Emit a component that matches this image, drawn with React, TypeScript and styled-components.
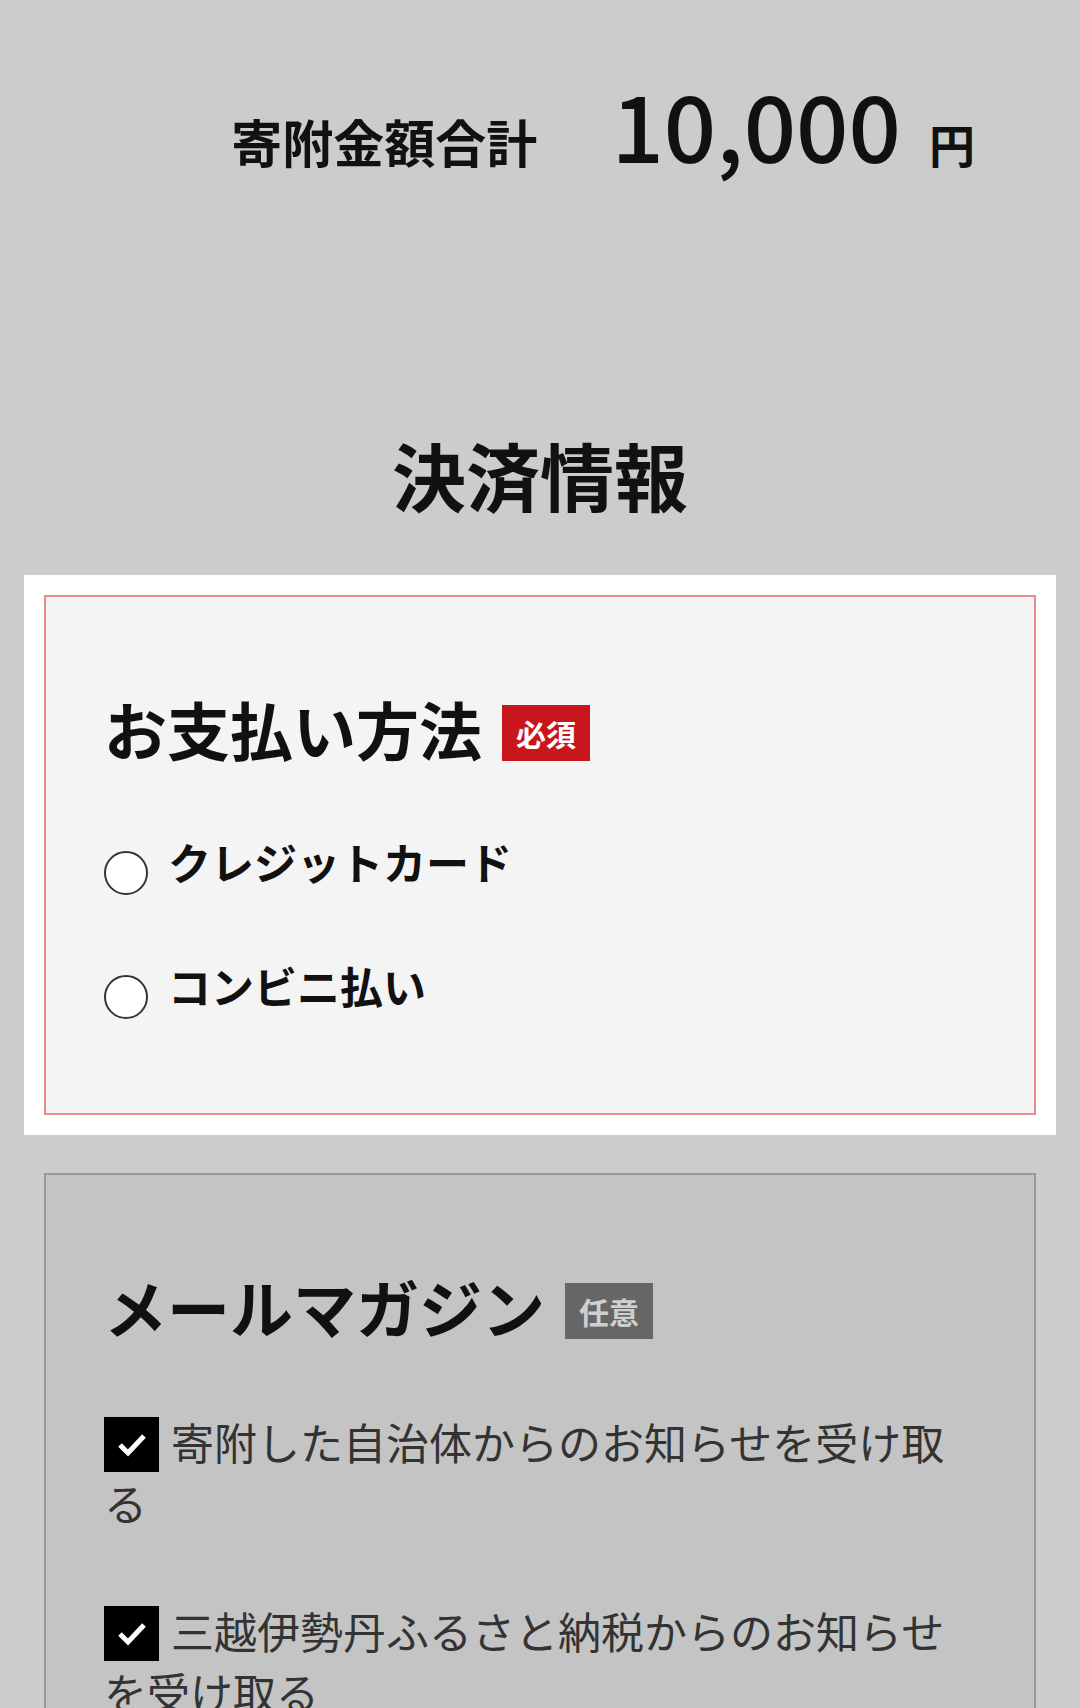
import styled, { createGlobalStyle } from 'styled-components'

const GlobalStyle = createGlobalStyle`
  body {
    margin: 0;
    background: #cccccc;
    color: #111;
    font-family: "Noto Sans CJK JP", "Noto Sans", sans-serif;
  }
`

const Page = styled.main`
  padding: 0 24px 60px;
`

const TotalRow = styled.div`
  align-items: baseline;
  display: flex;
  justify-content: flex-end;
  padding: 77px 81px 0 0;
`

const TotalLabel = styled.span`
  font-size: 51px;
  font-weight: 700;
  line-height: 1;
`

const TotalAmount = styled.span`
  font-size: 92px;
  font-weight: 500;
  line-height: 1;
  margin-left: 74px;
`

const Yen = styled.span`
  font-size: 46px;
  font-weight: 700;
  line-height: 1;
  margin-left: 28px;
`

const SectionTitle = styled.h2`
  font-size: 74px;
  font-weight: 700;
  line-height: 1;
  margin: 268px 0 64px;
  text-align: center;
`

const Highlight = styled.div`
  background: #fff;
  padding: 20px;
`

const Card = styled.section<{ $muted?: boolean }>`
  background: ${({ $muted }) => ($muted ? '#c4c4c4' : '#f4f4f4')};
  border: 2px solid ${({ $muted }) => ($muted ? '#999' : '#ec8a8a')};
  margin: ${({ $muted }) => ($muted ? '38px 20px 0' : '0')};
  padding: 96px 58px 94px;
`

const FieldTitle = styled.h3`
  align-items: center;
  display: flex;
  font-size: 63px;
  font-weight: 700;
  gap: 20px;
  line-height: 1.1;
  margin: 0 0 70px;
`

const Badge = styled.span<{ $required?: boolean }>`
  background: ${({ $required }) => ($required ? '#c8161d' : '#666')};
  color: ${({ $required }) => ($required ? '#fff' : '#cfcfcf')};
  font-size: 30px;
  font-weight: 700;
  line-height: 56px;
  margin-top: 10px;
  padding: 0 14px;
`

const RadioList = styled.div`
  display: flex;
  flex-direction: column;
  gap: 69px;
  padding-top: 8px;
`

const RadioRow = styled.label`
  align-items: flex-start;
  display: flex;
  gap: 20px;
`

const Radio = styled.input.attrs({ type: 'radio', name: 'payment' })`
  appearance: none;
  background: #fff;
  border: 2px solid #333;
  border-radius: 50%;
  flex: none;
  height: 44px;
  margin: 11px 0 0;
  width: 44px;
`

const RadioLabel = styled.span`
  font-size: 43px;
  font-weight: 700;
  line-height: 1;
`

const CheckList = styled.div`
  display: flex;
  flex-direction: column;
  gap: 68px;
`

const CheckItem = styled.label`
  color: #333;
  display: block;
  font-size: 43px;
  line-height: 60px;
`

const CheckBox = styled.span`
  background: #000;
  display: inline-block;
  height: 55px;
  margin-right: 12px;
  overflow: hidden;
  vertical-align: -12px;
  width: 55px;

  svg {
    display: block;
    margin: 15px auto 0;
  }
`

const Check = () => (
  <svg width="30" height="26" viewBox="0 0 30 26">
    <path d="M3 13 L11 21 L27 4" fill="none" stroke="#fff" strokeWidth="5" />
  </svg>
)

export default function App() {
  return (
    <>
      <GlobalStyle />
      <Page>
        <TotalRow>
          <TotalLabel>寄附金額合計</TotalLabel>
          <TotalAmount>10,000</TotalAmount>
          <Yen>円</Yen>
        </TotalRow>

        <SectionTitle>決済情報</SectionTitle>

        <Highlight>
          <Card>
            <FieldTitle>
              お支払い方法<Badge $required>必須</Badge>
            </FieldTitle>
            <RadioList>
              <RadioRow>
                <Radio value="credit" />
                <RadioLabel>クレジットカード</RadioLabel>
              </RadioRow>
              <RadioRow>
                <Radio value="cvs" />
                <RadioLabel>コンビニ払い</RadioLabel>
              </RadioRow>
            </RadioList>
          </Card>
        </Highlight>

        <Card $muted>
          <FieldTitle>
            メールマガジン<Badge>任意</Badge>
          </FieldTitle>
          <CheckList>
            <CheckItem>
              <CheckBox><Check /></CheckBox>
              寄附した自治体からのお知らせを受け取る
            </CheckItem>
            <CheckItem>
              <CheckBox><Check /></CheckBox>
              三越伊勢丹ふるさと納税からのお知らせを受け取る
            </CheckItem>
          </CheckList>
        </Card>
      </Page>
    </>
  )
}
